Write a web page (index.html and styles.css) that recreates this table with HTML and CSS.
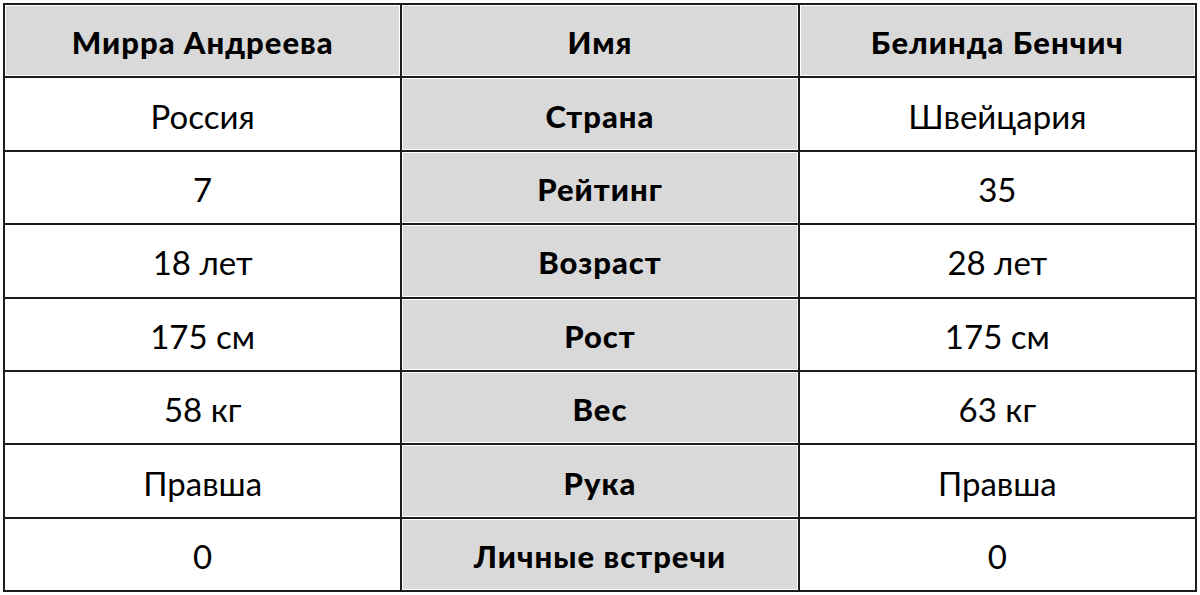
FILE: index.html
```html
<!DOCTYPE html>
<html lang="ru">
<head>
<meta charset="utf-8">
<link rel="stylesheet" href="styles.css">
</head>
<body>
<table class="cmp">
  <tr class="head">
    <td class="hd">Мирра Андреева</td>
    <td class="hd">Имя</td>
    <td class="hd">Белинда Бенчич</td>
  </tr>
  <tr><td>Россия</td><td class="mid">Страна</td><td>Швейцария</td></tr>
  <tr><td>7</td><td class="mid">Рейтинг</td><td>35</td></tr>
  <tr><td>18 лет</td><td class="mid">Возраст</td><td>28 лет</td></tr>
  <tr><td>175 см</td><td class="mid">Рост</td><td>175 см</td></tr>
  <tr><td>58 кг</td><td class="mid">Вес</td><td>63 кг</td></tr>
  <tr><td>Правша</td><td class="mid">Рука</td><td>Правша</td></tr>
  <tr><td>0</td><td class="mid">Личные встречи</td><td>0</td></tr>
</table>
</body>
</html>
```
FILE: styles.css
```css
html, body {
  margin: 0;
  padding: 0;
  background: #ffffff;
}
body {
  padding: 3px 3px 0 3px;
  font-family: Lato, "Liberation Sans", sans-serif;
  color: #000;
}
.cmp {
  border-collapse: collapse;
  width: 1194px;
  table-layout: fixed;
}
.cmp td {
  border: 2px solid #1c1c1c;
  height: 67.4px;
  padding: 4px 0 0 0;
  text-align: center;
  vertical-align: middle;
  font-size: 33px;
  line-height: 1;
  font-weight: 400;
  box-shadow: inset 0 0 0 1px #ffffff;
}
.cmp td.hd,
.cmp td.mid {
  background: #d9d9d9;
  font-weight: 900;
  font-size: 31px;
  letter-spacing: 1px;
}
```
